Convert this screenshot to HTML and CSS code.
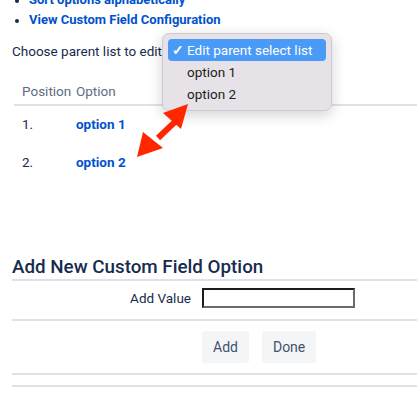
FILE: index.html
```html
<!DOCTYPE html>
<html>

<head>
    <title>Edit Custom Field Options</title>
    <link rel="stylesheet" href="styles.css">
</head>

<body>
    <div class="page">
        <!-- Operations list -->
        <ul class="ops">
            <li><a href="#">Sort options alphabetically</a></li>
            <li><a href="#">View Custom Field Configuration</a></li>
        </ul>

        <div class="choose">
            <span>Choose parent list to edit</span>
        </div>

        <!-- Options table -->
        <table class="options">
            <thead>
                <tr>
                    <th class="col-pos">Position</th>
                    <th>Option</th>
                </tr>
            </thead>
            <tbody>
                <tr>
                    <td class="col-pos">1.</td>
                    <td><a href="#">option 1</a></td>
                </tr>
                <tr>
                    <td class="col-pos">2.</td>
                    <td><a href="#">option 2</a></td>
                </tr>
            </tbody>
        </table>

        <!-- Add form -->
        <h2 class="form-title">Add New Custom Field Option</h2>
        <div class="form-row">
            <label class="form-label">Add Value</label>
            <input type="text" class="form-input">
        </div>
        <div class="form-buttons">
            <button class="btn">Add</button>
            <button class="btn">Done</button>
        </div>
        <div class="footer-line"></div>
        <div class="footer-line"></div>
    </div>

    <!-- Open select popup -->
    <div class="select-popup">
        <div class="select-item selected"><span class="check">&#10003;</span>Edit parent select list</div>
        <div class="select-item">option 1</div>
        <div class="select-item">option 2</div>
    </div>

    <!-- Annotation arrow -->
    <svg class="arrow" width="70" height="70" viewBox="0 0 70 70">
        <line x1="32" y1="36" x2="52" y2="17" stroke="#ff2600" stroke-width="6" />
        <polygon points="62,2 37,11 55,27" fill="#ff2600" />
        <polygon points="11,55 17,30 37,46" fill="#ff2600" />
    </svg>
</body>

</html>
```

FILE: styles.css
```css
/* Page */
body {
    margin: 0;
    width: 417px;
    height: 394px;
    overflow: hidden;
    position: relative;
    font-family: Roboto, "Liberation Sans", sans-serif;
    font-size: 13.5px;
    color: #172b4d;
    background: #fff;
}

.page {
    padding-left: 12px;
    width: 460px;
}

a {
    color: #0052cc;
    font-weight: bold;
    text-decoration: none;
}

/* Operations */
.ops {
    margin: -10px 0 0 0;
    padding-left: 17px;
    line-height: 20px;
    font-size: 13px;
}

.ops li::marker {
    font-size: 12px;
}

.choose {
    margin-top: 11px;
    line-height: 20px;
}

/* Table */
.options {
    margin-top: 20px;
    margin-left: 2px;
    border-collapse: collapse;
    width: 420px;
}

.options th {
    text-align: left;
    font-weight: normal;
    color: #5e6c84;
    padding: 0 0 3px 0;
    height: 20px;
    border-bottom: 2px solid #dfe1e6;
}

.options td {
    padding: 0;
    height: 39px;
    vertical-align: middle;
}

.options tbody tr:first-child td {
    height: 36px;
}

.col-pos {
    width: 54px;
    padding-left: 8px !important;
}

/* Form */
.form-title {
    margin: 74px 0 0 0;
    font-size: 18.8px;
    font-weight: 500;
    line-height: 24px;
    border-bottom: 2px solid #dfe1e6;
}

.form-row {
    display: flex;
    align-items: center;
    padding: 7px 0 11px 0;
    border-bottom: 2px solid #dfe1e6;
}

.form-label {
    width: 179px;
    text-align: right;
    padding-right: 11px;
}

.form-input {
    margin: 0;
    width: 149px;
    height: 16px;
    padding: 0;
    border: 2px solid #1c1c1c;
    border-right-color: #6b6b6b;
    border-bottom-color: #6b6b6b;
}

.form-buttons {
    display: flex;
    gap: 13px;
    padding: 10px 0 10px 190px;
    border-bottom: 2px solid #dfe1e6;
}

.btn {
    height: 32px;
    padding: 0 11px;
    border: none;
    border-radius: 3px;
    background: #f4f5f7;
    color: #42526e;
    font-family: inherit;
    font-size: 14px;
}

.footer-line {
    margin-top: 10px;
    height: 2px;
    background: #dfe1e6;
}

/* Select popup */
.select-popup {
    position: absolute;
    left: 162px;
    top: 33px;
    width: 158px;
    padding: 5px;
    background: #e7e2e8;
    border: 1px solid #cfcad1;
    border-radius: 7px;
    box-shadow: 0 4px 14px rgba(0, 0, 0, 0.18);
    font-size: 13.5px;
    color: #222;
}

.select-item {
    height: 22px;
    line-height: 22px;
    padding-left: 19px;
    border-radius: 4px;
}

.select-item.selected {
    background: #4a9af7;
    color: #fff;
    position: relative;
}

.check {
    position: absolute;
    left: 4px;
    font-weight: bold;
}

.arrow {
    position: absolute;
    left: 126px;
    top: 102px;
}
```
